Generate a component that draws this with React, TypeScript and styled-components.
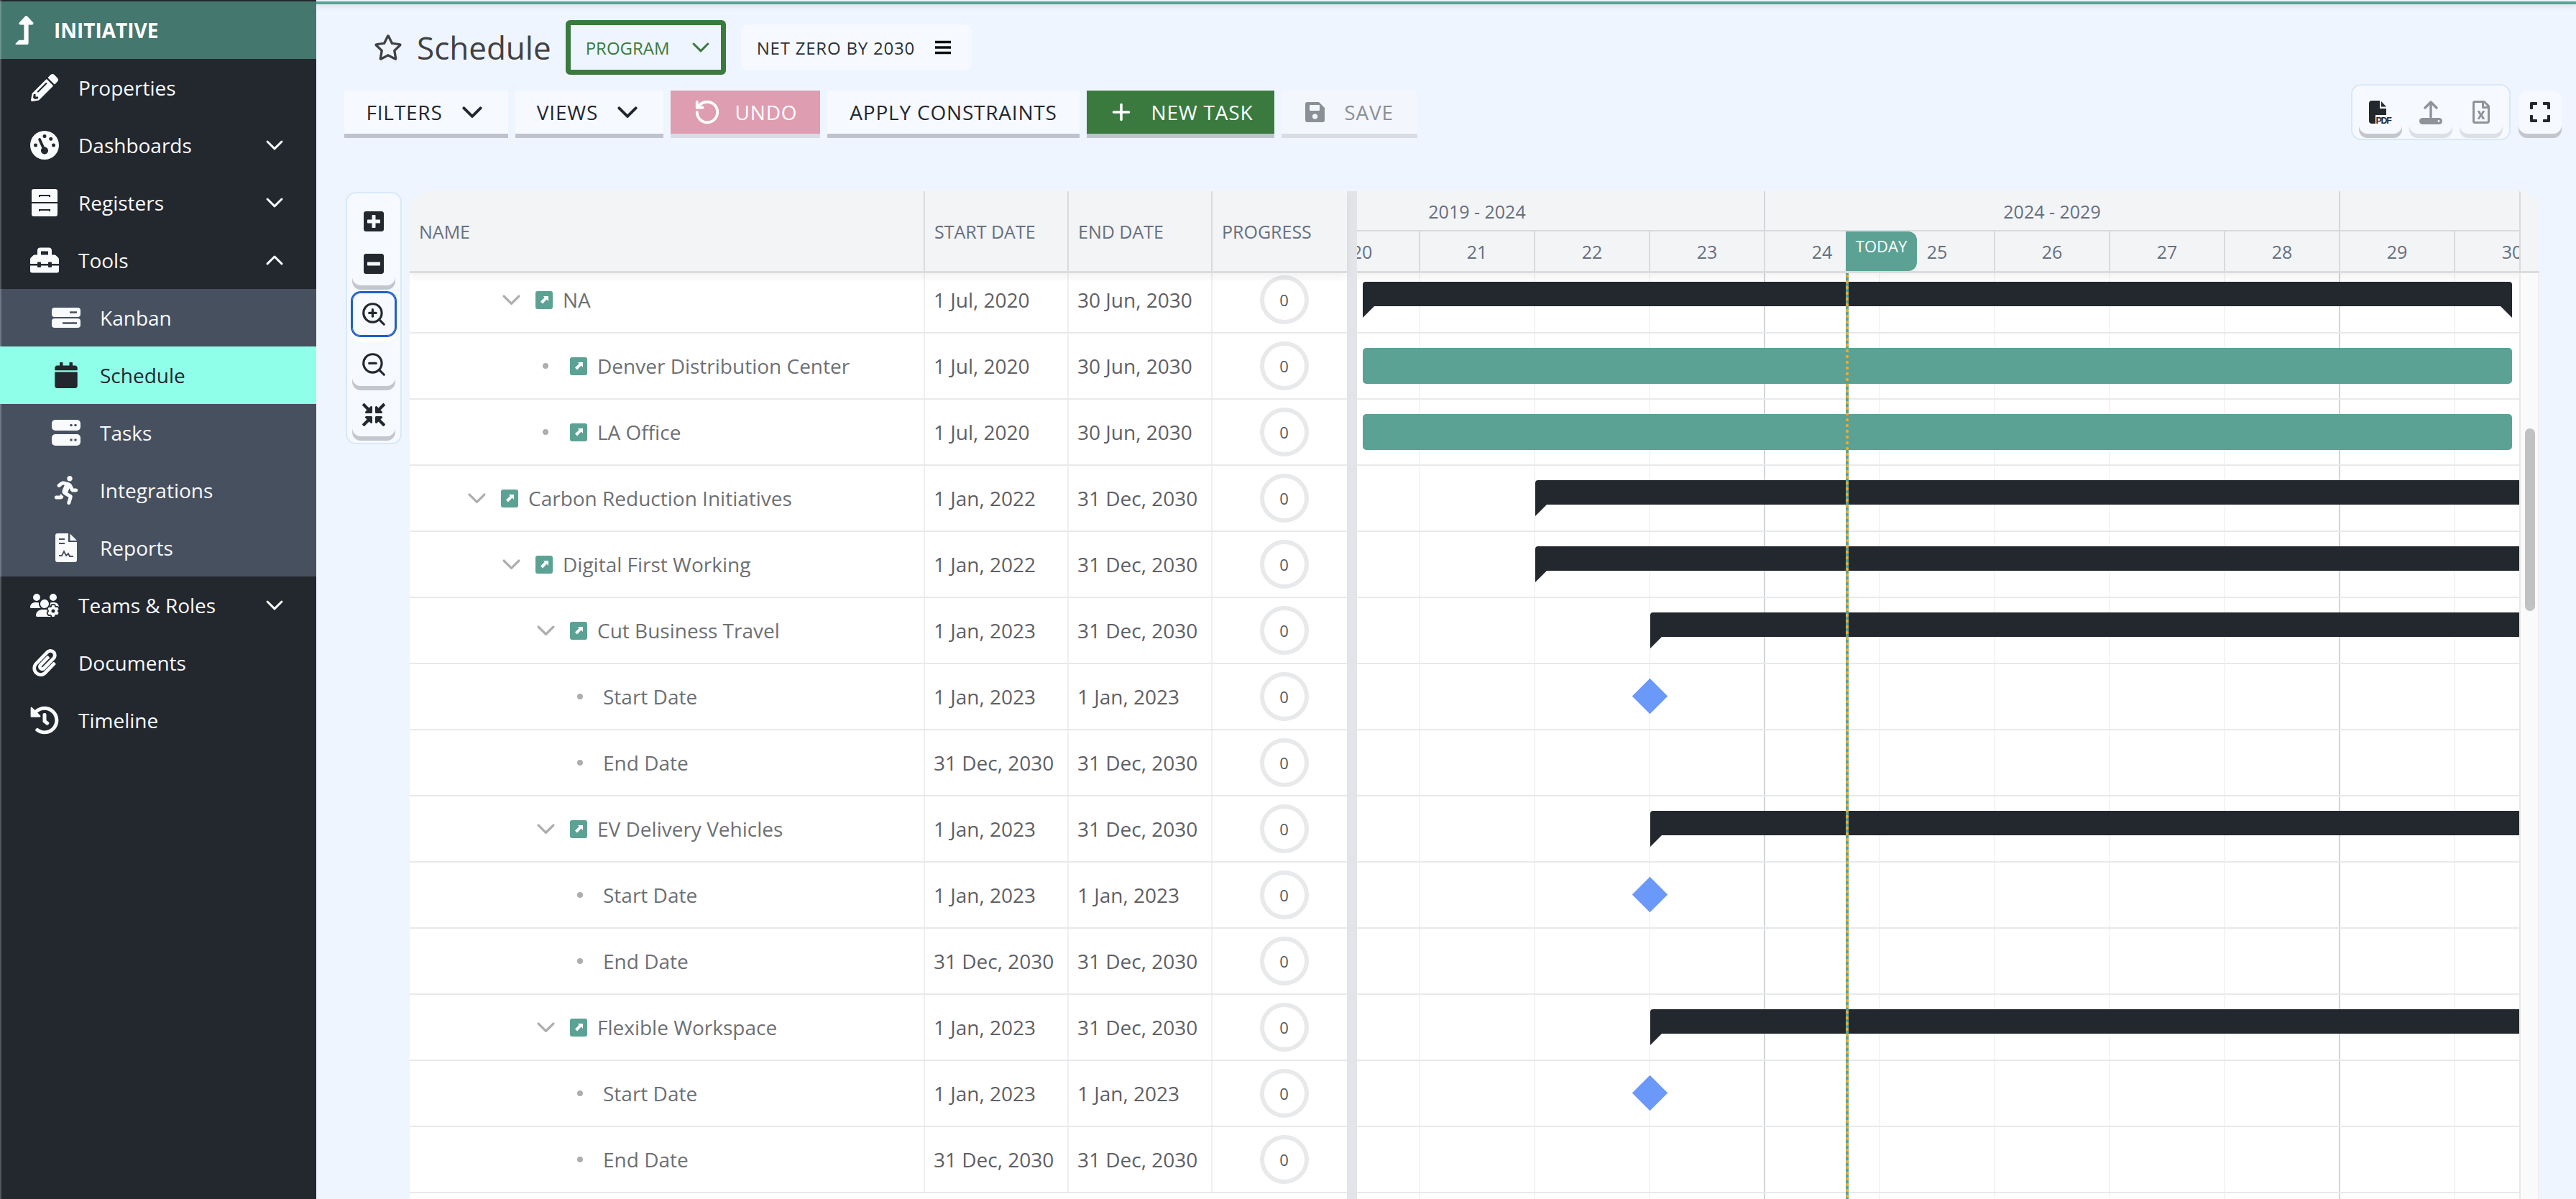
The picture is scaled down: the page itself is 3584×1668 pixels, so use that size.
import React from "react";
import styled, { createGlobalStyle } from "styled-components";
import {
  FaPencilAlt, FaToolbox, FaCalendar, FaRunning, FaPaperclip, FaHistory, FaLevelUpAlt,
  FaRegStar, FaPlusSquare, FaMinusSquare, FaCompressArrowsAlt, FaExpand, FaRegFileExcel,
} from "react-icons/fa";
import { FaGaugeHigh, FaUsersGear } from "react-icons/fa6";
import { RotateCcw, Plus, ZoomIn, ZoomOut } from "lucide-react";

const DARK = "#23272e";
const TEAL = "#5ba294";
const GREEN = "#3a7a3e";

const Global = createGlobalStyle`
  html, body { margin: 0; padding: 0; height: 100%; overflow: hidden; }
  body { font-family: "Open Sans", "Noto Sans", sans-serif; background: #eef5fe; }
  #root { height: 100%; }
  * { box-sizing: border-box; }
`;

const Page = styled.div`display: flex; width: 3584px; height: 1668px; overflow: hidden; background: #eef5fe;`;

/* ---------- Sidebar ---------- */
const Sidebar = styled.aside`
  position: relative; width: 440px; flex: none; background: ${DARK}; padding-top: 2px; color: #f8fafc;
  &::before { content: ""; position: absolute; left: 0; top: 0; bottom: 0; width: 2px; background: rgba(255,255,255,.22); }
`;
const Brand = styled.div`
  height: 80px; background: #44776e; display: flex; align-items: center; padding-left: 14px; gap: 21px;
  font-weight: 700; font-size: 28px; color: #fff;
`;
const SubMenu = styled.div`background: #47505f;`;
const NavRow = styled.div<{ $sub?: boolean; $active?: boolean }>`
  position: relative; height: 80px; display: flex; align-items: center; gap: 27px; font-size: 28px;
  padding: 0 46px 0 ${(p) => (p.$sub ? 72 : 42)}px;
  background: ${(p) => (p.$active ? "#90ffea" : "transparent")};
  color: ${(p) => (p.$active ? DARK : "#f8fafc")};
`;
const NavIcon = styled.span`width: 40px; height: 40px; flex: none; display: flex; align-items: center; justify-content: center;`;
const NavLabel = styled.span`flex: 1;`;
const Mirrored = styled.span`display: flex; transform: scaleX(-1);`;

const ChevronSvg = styled.svg<{ $up?: boolean }>`
  flex: none; fill: none; stroke: currentColor; stroke-linecap: round; stroke-linejoin: round;
  transform: ${(p) => (p.$up ? "rotate(180deg)" : "none")};
`;
const Chevron = ({ w = 24, sw = 3, up, color }: { w?: number; sw?: number; up?: boolean; color?: string }) => (
  <ChevronSvg $up={up} width={w} height={w * 0.58} viewBox="0 0 24 14" strokeWidth={(sw * 24) / w} style={color ? { color } : undefined}>
    <path d="M2 2 L12 12 L22 2" />
  </ChevronSvg>
);

const DrawerIcon = () => (
  <svg width="36" height="38" viewBox="0 0 36 38">
    <path d="M3 0H33a3 3 0 0 1 3 3V18H0V3a3 3 0 0 1 3-3Z" fill="#f8fafc" />
    <path d="M0 20H36V35a3 3 0 0 1-3 3H3a3 3 0 0 1-3-3Z" fill="#f8fafc" />
    <path d="M11 11V9h14v2M11 31V29h14v2" fill="none" stroke={DARK} strokeWidth="2" />
  </svg>
);
const KanbanIcon = () => (
  <svg width="40" height="28" viewBox="0 0 40 28">
    <rect width="40" height="13" rx="4" fill="#f8fafc" />
    <rect y="15" width="40" height="13" rx="4" fill="#f8fafc" />
    <path d="M25 6.5H35M15 21.5H35" stroke="#47505f" strokeWidth="2.4" />
  </svg>
);
const TasksIcon = () => (
  <svg width="40" height="36" viewBox="0 0 40 36">
    <rect width="40" height="15" rx="5" fill="#f8fafc" />
    <rect y="20" width="40" height="16" rx="5" fill="#f8fafc" />
    <circle cx="27" cy="7.5" r="1.8" fill="#47505f" /><circle cx="33" cy="7.5" r="1.8" fill="#47505f" />
    <circle cx="27" cy="28" r="1.8" fill="#47505f" /><circle cx="33" cy="28" r="1.8" fill="#47505f" />
  </svg>
);
const ReportIcon = () => (
  <svg width="30" height="40" viewBox="0 0 30 40">
    <path d="M3 0H18V12H30V37a3 3 0 0 1-3 3H3a3 3 0 0 1-3-3V3a3 3 0 0 1 3-3Z" fill="#f8fafc" />
    <path d="M20.5 0.5 30 10H20.5Z" fill="#f8fafc" />
    <path d="M5 8H13M5 14H13" stroke="#47505f" strokeWidth="2.2" />
    <path d="M5 31 9 31 12 25 15 31 18 28 20 32 25 32" fill="none" stroke="#47505f" strokeWidth="1.8" />
  </svg>
);
const SaveIcon = () => (
  <svg width="27" height="28" viewBox="0 0 27 28">
    <path d="M3 0H19L27 8V25a3 3 0 0 1-3 3H3a3 3 0 0 1-3-3V3a3 3 0 0 1 3-3Z" fill="#8b8f97" />
    <rect x="6" y="4" width="14" height="8" rx="1" fill="#f3f6fd" />
    <circle cx="13.5" cy="20" r="3.6" fill="#f3f6fd" />
  </svg>
);
const BarsIcon = () => (
  <svg width="22" height="20" viewBox="0 0 22 20"><path d="M0 2.5H22M0 10H22M0 17.5H22" stroke="#0d0f12" strokeWidth="3.4" /></svg>
);
const PdfSvgText = styled.text`font-family: "Liberation Sans", sans-serif; font-weight: 700; font-size: 12.5px; fill: ${DARK};`;
const PdfIcon = () => (
  <svg width="32" height="33" viewBox="0 0 32 33">
    <path d="M4 0H15V11H24V20H9V32H4a4 4 0 0 1-4-4V4a4 4 0 0 1 4-4Z" fill={DARK} />
    <path d="M17 1 24 8.5H17Z" fill={DARK} />
    <PdfSvgText x="9.5" y="32" textLength="22.5">PDF</PdfSvgText>
  </svg>
);
const UploadIcon = () => (
  <svg width="32" height="33" viewBox="0 0 32 33">
    <path d="M16 3V23M8 10 16 2 24 10" fill="none" stroke="#8f9298" strokeWidth="3.4" strokeLinecap="round" strokeLinejoin="round" />
    <rect y="24" width="32" height="9" rx="4.5" fill="#8f9298" />
    <circle cx="27" cy="28.5" r="1.4" fill="#f6f9ff" />
  </svg>
);
const LinkSquareIcon = () => (
  <svg width="24" height="25" viewBox="0 0 24 25">
    <rect width="24" height="25" rx="3" fill={TEAL} />
    <path d="M11 7H18V14L15.6 11.6 10 17.5 7 14.5 12.7 9Z" fill="#fff" />
  </svg>
);

const navTop = [
  { label: "Properties", icon: <FaPencilAlt size={38} /> },
  { label: "Dashboards", icon: <Mirrored><FaGaugeHigh size={40} /></Mirrored>, chevron: true },
  { label: "Registers", icon: <DrawerIcon />, chevron: true },
  { label: "Tools", icon: <FaToolbox size={40} />, chevron: true, up: true },
];
const navSub = [
  { label: "Kanban", icon: <KanbanIcon /> },
  { label: "Schedule", icon: <FaCalendar size={36} />, active: true },
  { label: "Tasks", icon: <TasksIcon /> },
  { label: "Integrations", icon: <FaRunning size={40} /> },
  { label: "Reports", icon: <ReportIcon /> },
];
const navBottom = [
  { label: "Teams & Roles", icon: <FaUsersGear size={50} />, chevron: true },
  { label: "Documents", icon: <FaPaperclip size={38} /> },
  { label: "Timeline", icon: <FaHistory size={40} /> },
];
type NavItem = { label: string; icon: React.ReactNode; chevron?: boolean; up?: boolean; active?: boolean };
const Nav = ({ item, sub }: { item: NavItem; sub?: boolean }) => (
  <NavRow $sub={sub} $active={item.active}>
    <NavIcon>{item.icon}</NavIcon>
    <NavLabel>{item.label}</NavLabel>
    {item.chevron && <Chevron up={item.up} />}
  </NavRow>
);

/* ---------- Main header ---------- */
const Main = styled.main`flex: 1; min-width: 0; display: flex; flex-direction: column; padding-top: 2px;`;
const Stripe = styled.div`height: 4px; flex: none; background: ${TEAL}; box-shadow: 0 3px 6px rgba(60,70,90,.14);`;
const TitleRow = styled.div`display: flex; align-items: center; height: 76px; margin-top: 22px; padding-left: 80px; flex: none;`;
const Title = styled.h1`margin: 0 20px 0 20px; font-weight: 400; font-size: 44px; color: #3f4145; line-height: 1;`;
const Star = styled.span`display: flex; color: #3f4145;`;
const ProgramSelect = styled.div`
  width: 223px; height: 76px; border: 7px solid ${GREEN}; border-radius: 6px; display: flex; align-items: center;
  padding-left: 21px; gap: 31px; color: ${GREEN}; font-size: 24px;
`;
const NetZero = styled.div`
  margin-left: 21px; width: 321px; height: 64px; border-radius: 10px; background: #f6f9ff; display: flex; align-items: center;
  padding-left: 22px; gap: 28px; color: #2c3036; font-size: 24px; letter-spacing: .8px;
`;
const ToolbarRow = styled.div`display: flex; align-items: center; justify-content: space-between; height: 60px; margin-top: 22px; padding: 0 20px 0 39px; flex: none;`;
const ToolGroup = styled.div`display: flex; gap: 10px;`;
const Btn = styled.div<{ $w: number; $bg?: string; $fg?: string; $shadow?: string; $gap?: number; $shift?: number }>`
  width: ${(p) => p.$w}px; height: 60px; display: flex; align-items: center; justify-content: center; gap: ${(p) => p.$gap ?? 27}px;
  font-size: 28px; letter-spacing: .8px; white-space: nowrap; padding-right: ${(p) => p.$shift ?? 0}px; padding-left: 0;
  background: ${(p) => p.$bg ?? "#f6f9ff"}; color: ${(p) => p.$fg ?? DARK};
  box-shadow: 0 6px 0 ${(p) => p.$shadow ?? "#bfc3cd"};
`;
const RightTools = styled.div`display: flex; align-items: center; gap: 11px;`;
const ExportBox = styled.div`
  display: flex; gap: 10px; padding: 7px 9px 7px; border: 2px solid #d8e8fb; border-radius: 14px; background: #f6f9ff;
`;
const IconBtn = styled.div<{ $faint?: boolean }>`
  width: 60px; height: 60px; border-radius: 12px; display: flex; align-items: center; justify-content: center;
  background: #f6f9ff; box-shadow: 0 6px 0 ${(p) => (p.$faint ? "#dcdfe5" : "#c3c6cd")};
  color: ${DARK};
`;

/* ---------- Work area ---------- */
const Work = styled.div`flex: 1; min-height: 0; display: flex; margin-top: 80px; padding: 0 51px 0 41px; gap: 11px;`;
const ZoomPanel = styled.div`
  width: 78px; height: 351px; margin-top: 1px; flex: none; border: 2px solid #d8e8fb; border-radius: 14px; background: #f6f9ff;
  padding: 9px 7px; display: flex; flex-direction: column; gap: 10px;
`;
const ZoomStack = styled.div`
  display: flex; flex-direction: column; height: 120px; border-radius: 12px; align-items: center; justify-content: space-around;
  box-shadow: 0 6px 0 #c3c6cd; color: ${DARK};
`;
const ZoomBtn = styled.div<{ $active?: boolean }>`
  height: 60px; flex: none; border-radius: 12px; display: flex; align-items: center; justify-content: center; color: ${DARK};
  box-shadow: ${(p) => (p.$active ? "inset 0 0 0 1px #1f5fc4, 0 0 0 2px #1f5fc4, 0 6px 0 2px #fff" : "0 6px 0 #c3c6cd")};
`;

const Table = styled.section`flex: 1; min-width: 0; display: flex; background: #fff; border-radius: 30px 30px 0 0; overflow: hidden;`;
const TreePane = styled.div`width: 1304px; flex: none; display: flex; flex-direction: column;`;
const cols = "715px 200px 200px 189px";
const TreeHead = styled.div`
  position: relative; z-index: 3; height: 114px; flex: none; display: grid; grid-template-columns: ${cols};
  background: #f3f4f6; border-bottom: 3px solid #dbdcdf; box-shadow: 0 6px 10px rgba(0,0,0,.05);
`;
const HeadCell = styled.div<{ $first?: boolean }>`
  display: flex; align-items: center; padding-left: 13px; font-size: 25px; color: #66707f;
  border-left: ${(p) => (p.$first ? "none" : "2px solid #d9dadd")};
`;
const TreeBody = styled.div`margin-top: -8px; flex: 1;`;
const Row = styled.div`height: 92px; display: grid; grid-template-columns: ${cols}; border-bottom: 2px solid #e8e9eb; font-size: 28px; color: #5f6063;`;
const NameCell = styled.div<{ $level: number }>`
  display: flex; align-items: center; padding-left: ${(p) => 29 + 48 * p.$level}px; color: #6d7073; white-space: nowrap;
`;
const Toggle = styled.span`width: 32px; flex: none; display: flex; justify-content: center; align-items: center;`;
const Dot = styled.span`width: 8px; height: 8px; border-radius: 50%; background: #adaeb0;`;
const TaskIcon = styled.span`margin: 0 14px 0 18px; width: 24px; display: flex;`;
const PlainName = styled.span`margin-left: 16px;`;
const Cell = styled.div`display: flex; align-items: center; padding-left: 12px; border-left: 2px solid #eeeff0; white-space: nowrap;`;
const ProgressCell = styled(Cell)`justify-content: center; padding-left: 12px;`;
const Ring = styled.div`
  width: 68px; height: 68px; border-radius: 50%; border: 6px solid #e8e9eb; display: flex; align-items: center; justify-content: center;
  font-size: 22px; color: #55575a;
`;
const Splitter = styled.div`width: 14px; flex: none; background: #e3e4e8;`;

const GanttPane = styled.div`position: relative; flex: 1; min-width: 0; display: flex; flex-direction: column; overflow: hidden;`;
const GanttHead = styled.div`
  position: relative; z-index: 3; flex: none; height: 114px; width: 1920px; margin-left: -234px; background: #f3f4f6;
  display: flex; flex-direction: column; box-shadow: 0 6px 10px rgba(0,0,0,.05); border-bottom: 3px solid #dbdcdf;
`;
const YearRow = styled.div`height: 56px; flex: none; display: flex; border-bottom: 2px solid #d9dadd;`;
const YearCell = styled.div`width: 800px; flex: none; border-left: 2px solid #d1d5db; display: flex; align-items: center; justify-content: center; font-size: 25px; color: #66707f; padding-top: 2px;`;
const MonthRow = styled.div`flex: 1; display: flex;`;
const MonthCell = styled.div`width: 160px; flex: none; border-left: 2px solid #d9dadd; display: flex; align-items: center; justify-content: center; font-size: 25px; color: #66707f;`;
const TodayTag = styled.div`
  position: absolute; left: 914px; top: 56px; width: 99px; height: 55px; padding-top: 5px; background: ${TEAL}; color: #fff;
  border-radius: 0 12px 12px 0; display: flex; justify-content: center; font-size: 22px; line-height: 30px;
`;
const GanttBody = styled.div`position: relative; flex: 1; min-height: 0; margin-top: -8px; width: 1920px; margin-left: -234px;`;
const GridLayer = styled.div`position: absolute; inset: 0; display: flex;`;
const GridCol = styled.div<{ $major?: boolean }>`width: 160px; flex: none; border-left: 2px solid ${(p) => (p.$major ? "#d1d5db" : "#f4f4f6")};`;
const GanttRow = styled.div`position: relative; height: 92px; border-bottom: 2px solid #e8e9eb;`;
const SummaryBar = styled.div<{ $closed?: boolean }>`
  position: absolute; top: 20px; height: 34px; background: ${DARK}; border-radius: 4px 4px 0 0;
  &::before { content: ""; position: absolute; left: 0; top: 34px; border-top: 16px solid ${DARK}; border-right: 16px solid transparent; }
  &::after { content: ""; display: ${(p) => (p.$closed ? "block" : "none")}; position: absolute; right: 0; top: 34px; border-top: 16px solid ${DARK}; border-left: 16px solid transparent; }
`;
const TaskBar = styled.div`position: absolute; top: 20px; height: 50px; background: ${TEAL}; border-radius: 5px;`;
const Milestone = styled.div`position: absolute; top: 27px; width: 35px; height: 35px; margin-left: -18px; background: #6b99f9; transform: rotate(45deg);`;
const TodayLine = styled.div`
  position: absolute; z-index: 2; left: 914px; top: 8px; bottom: 0; width: 4px; background-color: ${TEAL};
  background-image: radial-gradient(circle at 2px 4px, #efab30 1.9px, transparent 2.3px); background-size: 4px 8px;
`;
const ScrollColumn = styled.div`width: 28px; flex: none; display: flex; flex-direction: column;`;
const ScrollCap = styled.div`height: 114px; flex: none; background: #f3f4f6; border-left: 2px solid #d9dadd; border-bottom: 3px solid #dbdcdf;`;
const ScrollTrack = styled.div`
  flex: 1; background: #fafafa; border-left: 2px solid #e8e8e8; border-right: 2px solid #efefef;
  padding: 216px 4px 0 6px;
`;
const ScrollThumb = styled.div`height: 254px; border-radius: 8px; background: #c1c1c1;`;

type Kind = "summary" | "task" | "milestone" | "none";
interface TaskRow { name: string; level: number; type: "group" | "leaf" | "date"; start: string; end: string; kind: Kind; from?: number; to?: number }
const d = (name: string, start: string, end: string, kind: Kind, from?: number): TaskRow => ({ name, level: 4, type: "date", start, end, kind, from });
const rows: TaskRow[] = [
  { name: "NA", level: 2, type: "group", start: "1 Jul, 2020", end: "30 Jun, 2030", kind: "summary", from: 2020.5, to: 2030.5 },
  { name: "Denver Distribution Center", level: 3, type: "leaf", start: "1 Jul, 2020", end: "30 Jun, 2030", kind: "task", from: 2020.5, to: 2030.5 },
  { name: "LA Office", level: 3, type: "leaf", start: "1 Jul, 2020", end: "30 Jun, 2030", kind: "task", from: 2020.5, to: 2030.5 },
  { name: "Carbon Reduction Initiatives", level: 1, type: "group", start: "1 Jan, 2022", end: "31 Dec, 2030", kind: "summary", from: 2022, to: 2031 },
  { name: "Digital First Working", level: 2, type: "group", start: "1 Jan, 2022", end: "31 Dec, 2030", kind: "summary", from: 2022, to: 2031 },
  { name: "Cut Business Travel", level: 3, type: "group", start: "1 Jan, 2023", end: "31 Dec, 2030", kind: "summary", from: 2023, to: 2031 },
  d("Start Date", "1 Jan, 2023", "1 Jan, 2023", "milestone", 2023),
  d("End Date", "31 Dec, 2030", "31 Dec, 2030", "none"),
  { name: "EV Delivery Vehicles", level: 3, type: "group", start: "1 Jan, 2023", end: "31 Dec, 2030", kind: "summary", from: 2023, to: 2031 },
  d("Start Date", "1 Jan, 2023", "1 Jan, 2023", "milestone", 2023),
  d("End Date", "31 Dec, 2030", "31 Dec, 2030", "none"),
  { name: "Flexible Workspace", level: 3, type: "group", start: "1 Jan, 2023", end: "31 Dec, 2030", kind: "summary", from: 2023, to: 2031 },
  d("Start Date", "1 Jan, 2023", "1 Jan, 2023", "milestone", 2023),
  d("End Date", "31 Dec, 2030", "31 Dec, 2030", "none"),
];
const years = Array.from({ length: 12 }, (_, i) => 2019 + i);
const xOf = (t: number) => 160 * (t - 2019) + 2;

const GanttBar = ({ row }: { row: TaskRow }) => {
  if (row.kind === "none" || row.from === undefined) return null;
  if (row.kind === "milestone") return <Milestone style={{ left: xOf(row.from) }} />;
  const geometry = { left: xOf(row.from), width: xOf(row.to as number) - xOf(row.from) - 1 };
  if (row.kind === "task") return <TaskBar style={geometry} />;
  return <SummaryBar $closed={(row.to as number) < 2031} style={geometry} />;
};

export default function App() {
  return (
    <Page>
      <Global />
      <Sidebar>
        <Brand><FaLevelUpAlt size={40} /><span>INITIATIVE</span></Brand>
        {navTop.map((n) => <Nav key={n.label} item={n} />)}
        <SubMenu>{navSub.map((n) => <Nav key={n.label} item={n} sub />)}</SubMenu>
        {navBottom.map((n) => <Nav key={n.label} item={n} />)}
      </Sidebar>
      <Main>
        <Stripe />
        <TitleRow>
          <Star><FaRegStar size={40} /></Star>
          <Title>Schedule</Title>
          <ProgramSelect><span>PROGRAM</span><Chevron w={24} sw={3} /></ProgramSelect>
          <NetZero><span>NET ZERO BY 2030</span><BarsIcon /></NetZero>
        </TitleRow>
        <ToolbarRow>
          <ToolGroup>
            <Btn $w={228} $shift={6}><span>FILTERS</span><Chevron w={28} sw={4} /></Btn>
            <Btn $w={206} $shift={6}><span>VIEWS</span><Chevron w={28} sw={4} /></Btn>
            <Btn $w={208} $bg="#de9db0" $fg="#fff" $shadow="#d8dce5" $gap={20}><RotateCcw size={38} strokeWidth={2.4} /><span>UNDO</span></Btn>
            <Btn $w={351}><span>APPLY CONSTRAINTS</span></Btn>
            <Btn $w={261} $bg={GREEN} $fg="#fff" $gap={24}><Plus size={36} strokeWidth={2.4} /><span>NEW TASK</span></Btn>
            <Btn $w={189} $bg="#f3f6fd" $fg="#8b8f97" $shadow="#d8dce5" $gap={27}><SaveIcon /><span>SAVE</span></Btn>
          </ToolGroup>
          <RightTools>
            <ExportBox>
              <IconBtn><PdfIcon /></IconBtn>
              <IconBtn $faint><UploadIcon /></IconBtn>
              <IconBtn $faint><FaRegFileExcel size={32} color="#8f9298" /></IconBtn>
            </ExportBox>
            <IconBtn><FaExpand size={32} /></IconBtn>
          </RightTools>
        </ToolbarRow>
        <Work>
          <ZoomPanel>
            <ZoomStack><FaPlusSquare size={32} /><FaMinusSquare size={32} /></ZoomStack>
            <ZoomBtn $active><ZoomIn size={38} strokeWidth={2} /></ZoomBtn>
            <ZoomBtn><ZoomOut size={38} strokeWidth={2} /></ZoomBtn>
            <ZoomBtn><FaCompressArrowsAlt size={32} /></ZoomBtn>
          </ZoomPanel>
          <Table>
            <TreePane>
              <TreeHead>
                <HeadCell $first>NAME</HeadCell>
                <HeadCell>START DATE</HeadCell>
                <HeadCell>END DATE</HeadCell>
                <HeadCell>PROGRESS</HeadCell>
              </TreeHead>
              <TreeBody>
                {rows.map((r, i) => (
                  <Row key={i}>
                    <NameCell $level={r.level}>
                      <Toggle>{r.type === "group" ? <Chevron w={25} sw={3.4} color="#adaeb0" /> : <Dot />}</Toggle>
                      {r.type === "date" ? <PlainName>{r.name}</PlainName> : (
                        <>
                          <TaskIcon><LinkSquareIcon /></TaskIcon>
                          <span>{r.name}</span>
                        </>
                      )}
                    </NameCell>
                    <Cell>{r.start}</Cell>
                    <Cell>{r.end}</Cell>
                    <ProgressCell><Ring>0</Ring></ProgressCell>
                  </Row>
                ))}
              </TreeBody>
            </TreePane>
            <Splitter />
            <GanttPane>
              <GanttHead>
                <YearRow>
                  <YearCell>2019 - 2024</YearCell>
                  <YearCell>2024 - 2029</YearCell>
                  <YearCell />
                </YearRow>
                <MonthRow>
                  {years.map((y) => <MonthCell key={y}>{String(y).slice(2)}</MonthCell>)}
                </MonthRow>
                <TodayTag>TODAY</TodayTag>
              </GanttHead>
              <GanttBody>
                <GridLayer>
                  {years.map((y) => <GridCol key={y} $major={y === 2024 || y === 2029} />)}
                </GridLayer>
                {rows.map((r, i) => (
                  <GanttRow key={i}><GanttBar row={r} /></GanttRow>
                ))}
                <TodayLine />
              </GanttBody>
            </GanttPane>
            <ScrollColumn>
              <ScrollCap />
              <ScrollTrack><ScrollThumb /></ScrollTrack>
            </ScrollColumn>
          </Table>
        </Work>
      </Main>
    </Page>
  );
}
